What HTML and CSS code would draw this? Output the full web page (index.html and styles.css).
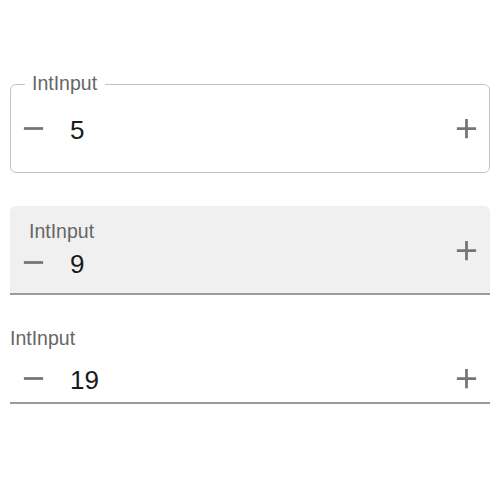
FILE: index.html
```html
<!DOCTYPE html>
<html>
<head>
<meta charset="utf-8">
<link rel="stylesheet" href="styles.css">
</head>
<body>
<div class="stack">
  <div class="field outlined">
    <span class="label outlined-label">IntInput</span>
    <span class="icon-btn"><svg viewBox="0 0 24 24"><path d="M19 13H5v-2h14v2z"/></svg></span>
    <span class="value">5</span>
    <span class="icon-btn"><svg viewBox="0 0 24 24"><path d="M19 13h-6v6h-2v-6H5v-2h6V5h2v6h6v2z"/></svg></span>
  </div>

  <div class="field filled">
    <span class="label filled-label">IntInput</span>
    <div class="group">
      <span class="icon-btn"><svg viewBox="0 0 24 24"><path d="M19 13H5v-2h14v2z"/></svg></span>
      <span class="value">9</span>
    </div>
    <span class="icon-btn plus-filled"><svg viewBox="0 0 24 24"><path d="M19 13h-6v6h-2v-6H5v-2h6V5h2v6h6v2z"/></svg></span>
  </div>

  <div class="standard">
    <span class="std-label">IntInput</span>
    <div class="field std-row">
      <span class="icon-btn"><svg viewBox="0 0 24 24"><path d="M19 13H5v-2h14v2z"/></svg></span>
      <span class="value">19</span>
      <span class="icon-btn"><svg viewBox="0 0 24 24"><path d="M19 13h-6v6h-2v-6H5v-2h6V5h2v6h6v2z"/></svg></span>
    </div>
  </div>
</div>
</body>
</html>
```

FILE: styles.css
```css
html, body {
  margin: 0;
  padding: 0;
  background: #ffffff;
}

body {
  font-family: "Liberation Sans", Arial, sans-serif;
  color: #212121;
}

.stack {
  display: flex;
  flex-direction: column;
  padding: 84px 10px 0;
}

.field {
  display: flex;
  align-items: center;
  box-sizing: border-box;
  position: relative;
}

.icon-btn {
  display: flex;
  width: 33px;
  height: 33px;
  flex: none;
}

.icon-btn svg {
  width: 33px;
  height: 33px;
  fill: #757575;
}

.value {
  flex: 1;
  margin-left: 20px;
  font-size: 26px;
  line-height: 30px;
  color: #1a1a1a;
  position: relative;
  top: 1px;
}

.label {
  position: absolute;
  font-size: 19.5px;
  line-height: 23px;
  color: #666666;
  white-space: nowrap;
}

/* Outlined */
.outlined {
  height: 89px;
  border: 1px solid #c4c4c4;
  border-radius: 6px;
  padding: 0 6px;
}

.outlined-label {
  top: -13px;
  left: 14px;
  padding: 0 8px 0 7px;
  background: #ffffff;
}

/* Filled */
.filled {
  margin-top: 33px;
  height: 89px;
  align-items: flex-start;
  background: #f0f0f0;
  border-radius: 6px 6px 0 0;
  border-bottom: 2px solid #9a9a9a;
  padding: 0 7px;
}

.filled-label {
  top: 14px;
  left: 19px;
}

.group {
  flex: 1;
  display: flex;
  align-items: center;
  margin-top: 40px;
}

.plus-filled {
  margin-top: 28px;
}

/* Standard */
.standard {
  margin-top: 32px;
  display: flex;
  flex-direction: column;
}

.std-label {
  font-size: 19.5px;
  line-height: 23px;
  color: #666666;
}

.std-row {
  padding: 12px 7px 7px;
  border-bottom: 2px solid #9a9a9a;
}
```
